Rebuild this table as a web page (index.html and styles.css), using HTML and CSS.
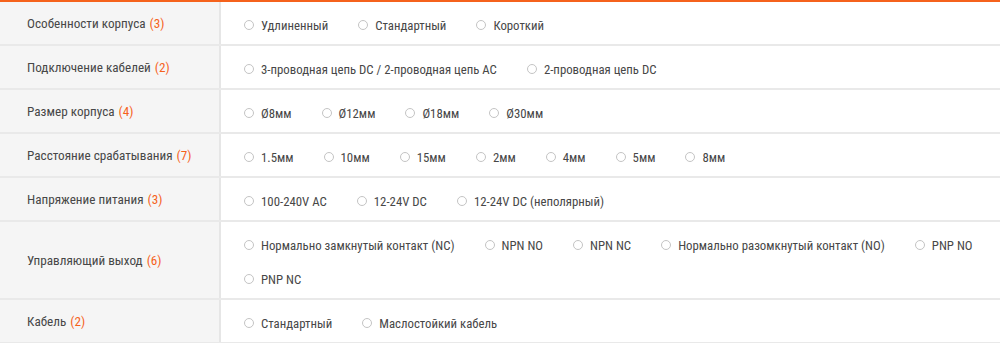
FILE: index.html
```html
<!DOCTYPE html>
<html lang="ru">
<head>
<meta charset="utf-8">
<link rel="stylesheet" href="styles.css">
</head>
<body>
<div class="filters">
  <div class="row">
    <div class="label">Особенности корпуса <span class="count">(3)</span></div>
    <div class="options">
      <label class="opt"><span class="radio"></span>Удлиненный</label>
      <label class="opt"><span class="radio"></span>Стандартный</label>
      <label class="opt"><span class="radio"></span>Короткий</label>
    </div>
  </div>
  <div class="row">
    <div class="label">Подключение кабелей <span class="count">(2)</span></div>
    <div class="options">
      <label class="opt"><span class="radio"></span>3-проводная цепь DC / 2-проводная цепь AC</label>
      <label class="opt"><span class="radio"></span>2-проводная цепь DC</label>
    </div>
  </div>
  <div class="row">
    <div class="label">Размер корпуса <span class="count">(4)</span></div>
    <div class="options">
      <label class="opt"><span class="radio"></span>Ø8мм</label>
      <label class="opt"><span class="radio"></span>Ø12мм</label>
      <label class="opt"><span class="radio"></span>Ø18мм</label>
      <label class="opt"><span class="radio"></span>Ø30мм</label>
    </div>
  </div>
  <div class="row">
    <div class="label">Расстояние срабатывания <span class="count">(7)</span></div>
    <div class="options">
      <label class="opt"><span class="radio"></span>1.5мм</label>
      <label class="opt"><span class="radio"></span>10мм</label>
      <label class="opt"><span class="radio"></span>15мм</label>
      <label class="opt"><span class="radio"></span>2мм</label>
      <label class="opt"><span class="radio"></span>4мм</label>
      <label class="opt"><span class="radio"></span>5мм</label>
      <label class="opt"><span class="radio"></span>8мм</label>
    </div>
  </div>
  <div class="row">
    <div class="label">Напряжение питания <span class="count">(3)</span></div>
    <div class="options">
      <label class="opt"><span class="radio"></span>100-240V AC</label>
      <label class="opt"><span class="radio"></span>12-24V DC</label>
      <label class="opt"><span class="radio"></span>12-24V DC (неполярный)</label>
    </div>
  </div>
  <div class="row">
    <div class="label">Управляющий выход <span class="count">(6)</span></div>
    <div class="options">
      <label class="opt"><span class="radio"></span>Нормально замкнутый контакт (NC)</label>
      <label class="opt"><span class="radio"></span>NPN NO</label>
      <label class="opt"><span class="radio"></span>NPN NC</label>
      <label class="opt"><span class="radio"></span>Нормально разомкнутый контакт (NO)</label>
      <label class="opt"><span class="radio"></span>PNP NO</label>
      <label class="opt"><span class="radio"></span>PNP NC</label>
    </div>
  </div>
  <div class="row">
    <div class="label">Кабель <span class="count">(2)</span></div>
    <div class="options">
      <label class="opt"><span class="radio"></span>Стандартный</label>
      <label class="opt"><span class="radio"></span>Маслостойкий кабель</label>
    </div>
  </div>
</div>
</body>
</html>
```

FILE: styles.css
```css
html, body {
  margin: 0;
  padding: 0;
  background: #ffffff;
}

.filters {
  border-top: 2px solid #f5621c;
  font-family: "Roboto Condensed", "Liberation Sans Narrow", Roboto, sans-serif;
  font-stretch: condensed;
  font-size: 12.8px;
  color: #474747;
}

.row {
  display: grid;
  grid-template-columns: 221px 1fr;
  border-bottom: 2px solid #e9e9e9;
}

.label {
  background: #f5f5f5;
  border-right: 2px solid #e6e6e6;
  padding-left: 27px;
  display: flex;
  align-items: center;
  font-size: 13.2px;
}

.count {
  color: #f5621c;
  margin-left: 4px;
}

.options {
  display: flex;
  flex-wrap: wrap;
  column-gap: 30px;
  row-gap: 12px;
  padding: 12px 8px 8px 23px;
}

.opt {
  display: flex;
  align-items: center;
  height: 22px;
  white-space: nowrap;
}

.radio {
  width: 8px;
  height: 8px;
  border: 1px solid #c4c4c4;
  border-radius: 50%;
  margin-right: 7px;
  flex: none;
}
```
